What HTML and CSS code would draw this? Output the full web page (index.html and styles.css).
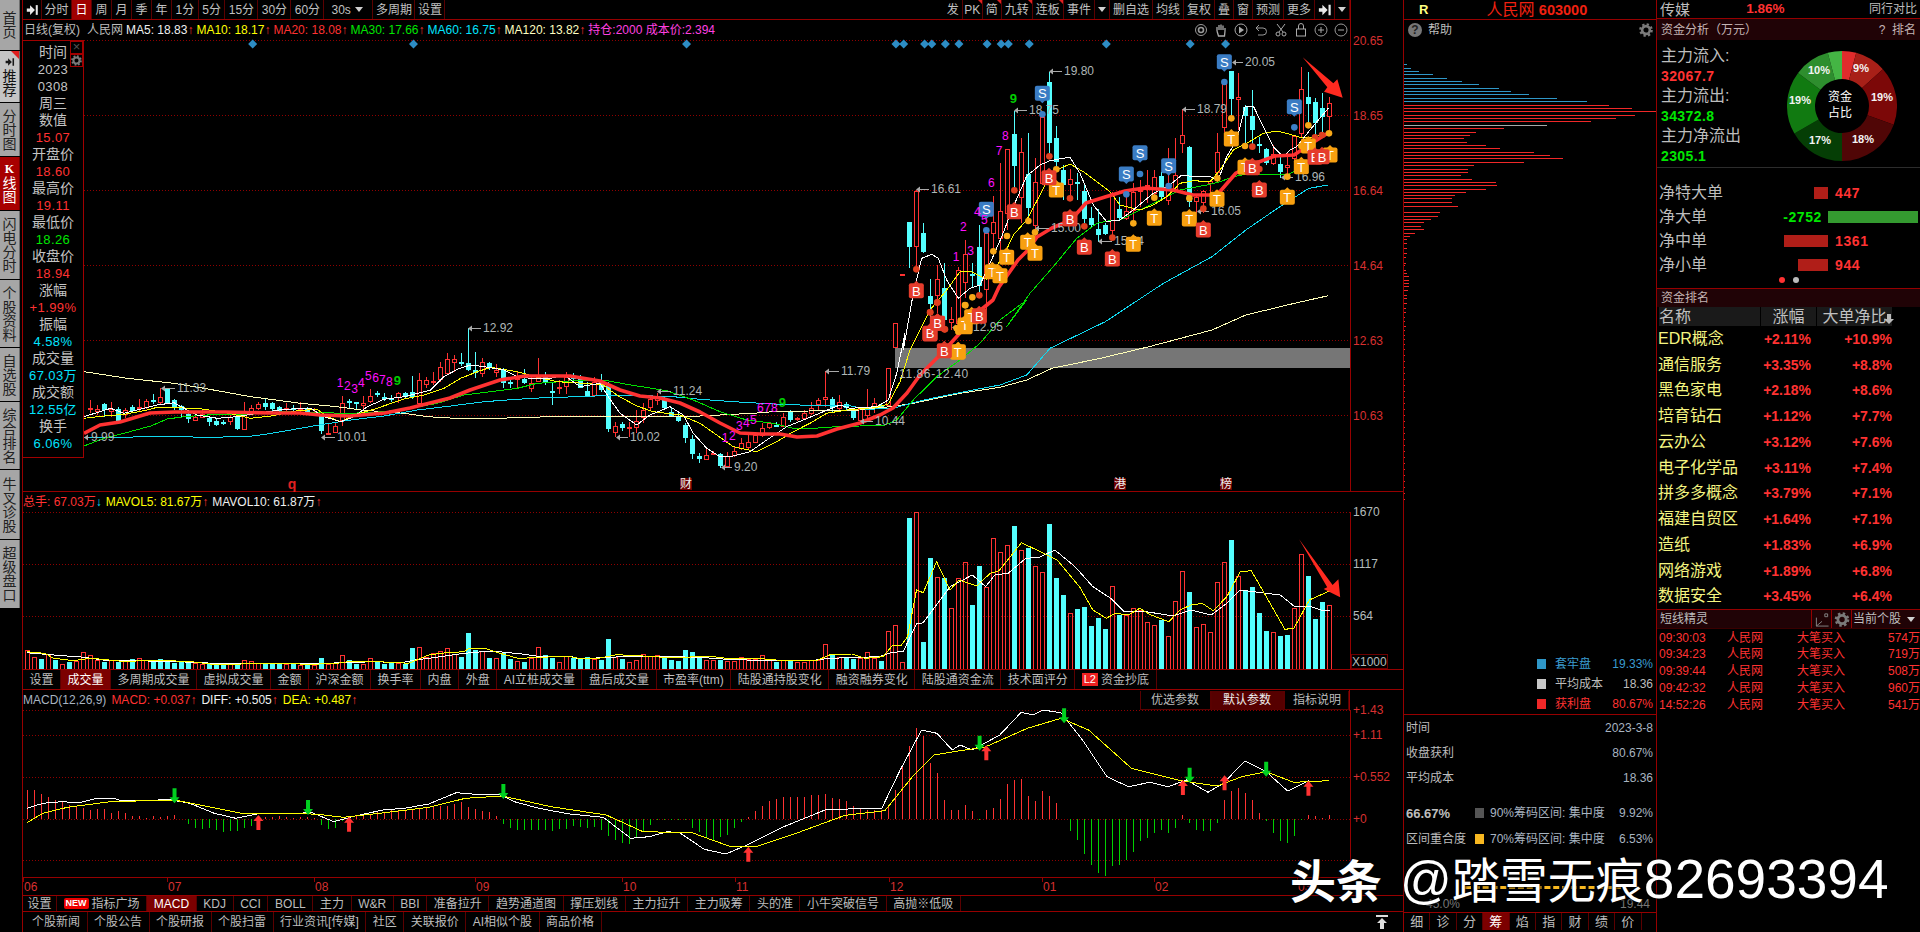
FILE: index.html
```html
<!DOCTYPE html>
<html lang="zh-CN">
<head>
<meta charset="utf-8">
<title>人民网 603000 K线图</title>
<link rel="stylesheet" href="styles.css">
</head>
<body>
<svg class="defs" width="0" height="0"><defs>
<symbol id="gear" viewBox="0 0 16 16"><circle cx="8" cy="8" r="4.4" fill="none" stroke="#7a7a7a" stroke-width="3"/><circle cx="8" cy="8" r="6.5" fill="none" stroke="#7a7a7a" stroke-width="2.6" stroke-dasharray="2.6 2.5"/></symbol>
<symbol id="playend" viewBox="0 0 16 16"><path d="M1 6h4V2l6 6-6 6v-4H1z" fill="#e8e8e8"/><rect x="12" y="2" width="2.5" height="12" fill="#e8e8e8"/></symbol>
</defs></svg>
<div class="app">
  <nav class="side">
    <a class="sbtn h49">首<br>页</a>
    <a class="sbtn h51 lite"><svg class="sico"><use href="#playend"/></svg>推<br>荐</a>
    <a class="sbtn h53">分<br>时<br>图</a>
    <a class="sbtn h53 on"><b class="k">K</b>线<br>图</a>
    <a class="sbtn h68">闪<br>电<br>分<br>时</a>
    <a class="sbtn h67">个<br>股<br>资<br>料</a>
    <a class="sbtn h53">自<br>选<br>股</a>
    <a class="sbtn h67">综<br>合<br>排<br>名</a>
    <a class="sbtn h69">牛<br>叉<br>诊<br>股</a>
    <a class="sbtn h68">超<br>级<br>盘<br>口</a>
  </nav>

  <main class="center">
    <div class="toolbar">
      <div class="tgroup left">
        <a class="tb ico"><svg class="i14"><use href="#playend"/></svg></a>
        <a class="tb w30">分时</a><a class="tb on">日</a><a class="tb">周</a><a class="tb">月</a><a class="tb">季</a><a class="tb">年</a>
        <a class="tb">1分</a><a class="tb">5分</a><a class="tb w33">15分</a><a class="tb w33">30分</a><a class="tb w33">60分</a>
        <a class="tb w49">30s<i class="tri"></i></a><a class="tb w42">多周期</a><a class="tb w30">设置</a>
      </div>
      <div class="tgroup">
        <a class="tb">发</a><a class="tb flag tight">PK</a><a class="tb flag">简</a><a class="tb flag">九转</a><a class="tb flag">连板</a><a class="tb">事件</a><a class="tb w15"><i class="tri"></i></a>
        <a class="tb">删自选</a><a class="tb">均线</a><a class="tb">复权</a><a class="tb">叠</a><a class="tb">窗</a><a class="tb">预测</a><a class="tb">更多</a>
        <a class="tb ico"><svg class="i14"><use href="#playend"/></svg></a><a class="tb w15"><i class="tri"></i></a>
      </div>
    </div>

    <div class="legend">
      <span>日线(复权)</span><span class="ml">人民网</span>
      <span class="cw">MA5: 18.83<b class="up">↑</b></span>
      <span class="cy">MA10: 18.17<b class="up">↑</b></span>
      <span class="cr">MA20: 18.08<b class="up">↑</b></span>
      <span class="cg">MA30: 17.66<b class="up">↑</b></span>
      <span class="cc">MA60: 16.75<b class="up">↑</b></span>
      <span class="cp">MA120: 13.82<b class="up">↑</b></span>
      <span class="cm">持仓:2000 成本价:2.394</span>
      <span class="tools">
        <svg viewBox="0 0 14 14"><circle cx="7" cy="7" r="5.5" fill="none" stroke="#999"/><circle cx="7" cy="7" r="2.5" fill="none" stroke="#999" stroke-width="1.6"/></svg>
        <svg viewBox="0 0 14 14"><path d="M3 8V4M5 7V2M7 7V1.5M9 7V2.5M11 8V5M3 8l1.5 5h6L11 8" fill="none" stroke="#aaa" stroke-width="1.3"/></svg>
        <svg viewBox="0 0 14 14"><circle cx="7" cy="7" r="6" fill="none" stroke="#aaa"/><path d="M5 3.5l5 3.5-5 3.5z" fill="#aaa"/></svg>
        <svg viewBox="0 0 14 14"><path d="M2 5h7a3.5 3.5 0 0 1 0 7H4M2 5l3-3M2 5l3 3" fill="none" stroke="#999"/></svg>
        <svg viewBox="0 0 14 14"><path d="M3 1l6 8M11 1L5 9" stroke="#aaa" fill="none"/><circle cx="4" cy="11" r="2" fill="none" stroke="#aaa"/><circle cx="10" cy="11" r="2" fill="none" stroke="#aaa"/></svg>
        <svg viewBox="0 0 14 14"><rect x="2.5" y="6" width="9" height="7" fill="none" stroke="#aaa"/><path d="M4.5 6V3a2.5 2.5 0 0 1 5 0v3" fill="none" stroke="#aaa"/></svg>
        <svg viewBox="0 0 14 14"><circle cx="7" cy="7" r="6" fill="none" stroke="#999"/><path d="M4 7h6M7 4v6" stroke="#aaa"/></svg>
        <svg viewBox="0 0 14 14"><circle cx="7" cy="7" r="6" fill="none" stroke="#999"/><path d="M4 7h6" stroke="#aaa"/></svg>
      </span>
    </div>

    <section class="kpanel">
      <svg id="kchart" class="plot" width="1380" height="451" viewBox="23 40 1380 451"></svg>
      <aside class="info">
        <i class="ibox x">×</i><i class="ibox g"><svg><use href="#gear"/></svg></i>
        <p>时间</p><p class="n">2023</p><p class="n">0308</p><p>周三</p><p>数值</p>
        <p class="n cr">15.07</p><p>开盘价</p><p class="n cr">18.60</p><p>最高价</p><p class="n cr">19.11</p>
        <p>最低价</p><p class="n cg">18.26</p><p>收盘价</p><p class="n cr">18.94</p><p>涨幅</p>
        <p class="n cr">+1.99%</p><p>振幅</p><p class="n cc">4.58%</p><p>成交量</p><p class="n cc">67.03万</p>
        <p>成交额</p><p class="n cc">12.55亿</p><p>换手</p><p class="n cc">6.06%</p>
      </aside>
    </section>

    <section class="volpanel">
      <div class="sublegend">
        <span class="cr">总手: 67.03万<b class="cc">↓</b></span>
        <span class="cy">MAVOL5: 81.67万<b class="up">↑</b></span>
        <span class="cw">MAVOL10: 61.87万<b class="up">↑</b></span>
      </div>
      <svg id="vchart" class="plot" width="1380" height="158" viewBox="23 512 1380 158"></svg>
    </section>

    <div class="tabs r20">
      <a>设置</a><a class="on">成交量</a><a>多周期成交量</a><a>虚拟成交量</a><a>金额</a><a>沪深金额</a><a>换手率</a><a>内盘</a><a>外盘</a><a>AI立桩成交量</a><a>盘后成交量</a><a>市盈率(ttm)</a><a>陆股通持股变化</a><a>融资融券变化</a><a>陆股通资金流</a><a>技术面评分</a><a><em class="l2">L2</em>资金抄底</a>
    </div>

    <section class="macd">
      <div class="sublegend between">
        <div class="row">
          <span class="cgray">MACD(12,26,9)</span>
          <span class="cr">MACD: +0.037<b class="up">↑</b></span>
          <span class="cw">DIFF: +0.505<b class="up">↑</b></span>
          <span class="cy">DEA: +0.487<b class="up">↑</b></span>
        </div>
        <div class="params"><a>优选参数</a><a class="on">默认参数</a><a>指标说明</a></div>
      </div>
      <svg id="mchart" class="plot" width="1380" height="185" viewBox="23 710 1380 185"></svg>
    </section>

    <div class="tabs r17">
      <a>设置</a><a><em class="new">NEW</em>指标广场</a><a class="on">MACD</a><a>KDJ</a><a>CCI</a><a>BOLL</a><a>主力</a><a>W&amp;R</a><a>BBI</a><a>准备拉升</a><a>趋势通道图</a><a>撑压划线</a><a>主力拉升</a><a>主力吸筹</a><a>头的准</a><a>小牛突破信号</a><a>高抛※低吸</a>
    </div>
    <div class="tabs r20 wide">
      <a>个股新闻</a><a>个股公告</a><a>个股研报</a><a>个股扫雷</a><a>行业资讯[传媒]</a><a>社区</a><a>关联报价</a><a>AI相似个股</a><a>商品价格</a>
      <svg class="totop" viewBox="0 0 14 14"><rect x="1" y="0" width="12" height="2" fill="#ddd"/><path d="M7 3l5 5H9v6H5V8H2z" fill="#ddd"/></svg>
    </div>
  </main>

  <section class="chip">
    <header class="chiptop"><b class="r">R</b><span class="stock">人民网 <b>603000</b></span></header>
    <div class="help"><i class="q">?</i><span>帮助</span><svg class="gear16"><use href="#gear"/></svg></div>
    <svg id="cchart" width="252" height="614" viewBox="1404 41 252 614"></svg>
    <div class="lg"><i class="sq s-b"></i><span class="cblue">套牢盘</span><em class="cblue">19.33%</em></div>
    <div class="lg"><i class="sq s-g"></i><span>平均成本</span><em>18.36</em></div>
    <div class="lg"><i class="sq s-r"></i><span class="cr">获利盘</span><em class="cr">80.67%</em></div>
    <div class="stats">
      <div class="st"><span>时间</span><em>2023-3-8</em></div>
      <div class="st"><span>收盘获利</span><em>80.67%</em></div>
      <div class="st"><span>平均成本</span><em>18.36</em></div>
      <div class="st2 first"><b>66.67%</b><i class="sq2 s-d"></i><span>90%筹码区间: 集中度</span><em>9.92%</em></div>
      <div class="st2"><b class="thin">区间重合度</b><i class="sq2 s-y"></i><span>70%筹码区间: 集中度</span><em>6.53%</em></div>
    </div>
    <div class="range"><div class="dash"></div><div class="rlabels"><span>45.0%</span><span>19.44</span></div></div>
    <div class="chiptabs"><a>细</a><a>诊</a><a>分</a><a class="on">筹</a><a>焰</a><a>指</a><a>财</a><a>绩</a><a>价</a></div>
  </section>

  <aside class="right">
    <div class="rtop"><span class="big">传媒</span><b class="pct">1.86%</b><span>同行对比</span></div>
    <div class="rhead"><span>资金分析（万元）</span><span>?&nbsp;&nbsp;排名</span></div>
    <div class="fund">
      <div class="fund-l">
        <p>主力流入:</p><p class="v cr">32067.7</p>
        <p>主力流出:</p><p class="v cg">34372.8</p>
        <p>主力净流出</p><p class="v cg">2305.1</p>
      </div>
      <svg id="donut" width="110" height="110" viewBox="-55 -55 110 110"></svg>
    </div>
    <div id="flows" class="flows"></div>
    <div class="dots"><i class="d1"></i><i class="d2"></i></div>
    <div class="rhead slim"><span>资金排名</span></div>
    <div class="rankh"><span class="l">名称</span><span>涨幅</span><span>大单净比<svg class="down" viewBox="0 0 10 10"><path d="M3 0h4v5h3L5 10 0 5h3z" fill="#bbb"/></svg></span></div>
    <div id="rank"></div>
    <div class="shead"><span class="t">短线精灵</span><span class="sb"><svg viewBox="0 0 16 16"><path d="M2 6V15H15M2 15l6-5M11 2h3v3h-3z" fill="none" stroke="#888"/></svg></span><span class="sb"><svg><use href="#gear"/></svg></span><span class="cur">当前个股<i class="tri"></i></span></div>
    <div id="short"></div>
  </aside>

  <div class="watermark"><b>头条</b><span class="at">@</span>踏雪无痕<span>82693394</span></div>
</div>
<script src="chart.js"></script>
</body>
</html>
```

FILE: styles.css
```css
* { box-sizing: border-box; }
html, body { margin: 0; height: 932px; background: #000; overflow: hidden; }
body { font: 12px/1 "Liberation Sans", "Noto Sans CJK SC", sans-serif; color: #bdbdbd; }
p { margin: 0; }
a { display: block; }
i, em { font-style: normal; }
.defs { position: absolute; }

.app { position: relative; display: grid; grid-template-columns: 22px 1381px 253px 264px; height: 932px; }

/* colours */
.cr { color: #ff3232; } .cg { color: #00e600; } .cc { color: #00e4ff; } .cy { color: #ffff00; }
.cw { color: #f0f0f0; } .cp { color: #ffffc0; } .cm { color: #ff40e0; } .cgray { color: #a8b4c0; }
.cblue { color: #3a9bd0; }
b.up { color: #ff3232; font-weight: normal; }
b { font-weight: normal; }

/* sidebar */
.side { display: flex; flex-direction: column; gap: 1px; width: 20px; }
.sbtn { display: flex; flex-direction: column; justify-content: center; align-items: center; background: #a6a6a6; border-right: 1px solid #6e6e6e; color: #222; font-size: 14px; line-height: 14px; text-align: center; }
.sbtn.lite { position: relative; background: #c4c4c4; color: #111; }
.sbtn.lite::after { content: ""; position: absolute; top: 0; right: 0; border: 4px solid transparent; border-top-color: #e02020; border-right-color: #e02020; }
.sbtn.on { background: #a80000; color: #fff; border-right-color: #700000; }
.sbtn .k { font: bold 12px/13px "Liberation Serif", serif; }
.sico { width: 10px; height: 10px; margin-bottom: 2px; filter: invert(1); }
.h49 { height: 50px; } .h51 { height: 51px; } .h53 { height: 53px; }
.h67 { height: 67px; } .h68 { height: 68px; } .h69 { height: 69px; }

/* center */
.center { display: flex; flex-direction: column; border-left: 1px solid #960000; min-width: 0; }
.toolbar { display: flex; justify-content: space-between; width: 1328px; height: 20px; border-bottom: 1px solid #960000; border-right: 1px solid #960000; }
.tgroup { display: flex; }
.tb { position: relative; display: flex; align-items: center; justify-content: center; height: 19px; padding: 0 3px; border-right: 1px solid #5a0000; color: #c0c0c0; white-space: nowrap; }
.left .tb { padding: 0 3.5px; }
.tb.on { background: #a00000; color: #fff; }
.left .tb.w30 { width: 30px; padding: 0; } .left .tb.w42 { width: 42px; padding: 0; }
.left .tb.w33 { width: 33px; padding: 0; }
.left .tb.w49 { width: 49px; justify-content: flex-start; gap: 4px; padding: 0 0 0 7px; }
.tb.w15 { width: 15px; padding: 0; }
.tb.tight { padding: 0 1.5px; }
.tb.ico { padding: 0 2.5px; }
.left .tb.ico { padding: 0 2.5px; width: 19px; }
.tb.flag::after { content: ""; position: absolute; top: 0; right: 0; border: 2.5px solid transparent; border-top-color: #e02020; border-right-color: #e02020; }
.i14 { width: 14px; height: 14px; }
.tri { display: inline-block; border: 4px solid transparent; border-top: 5px solid #d0d0d0; border-bottom: 0; }

.legend { display: flex; align-items: center; gap: 3px; width: 1328px; height: 20px; padding-left: 1px; border-right: 1px solid #960000; white-space: nowrap; }
.legend .ml { margin-left: 4px; }
.tools { display: flex; gap: 6px; margin-left: auto; padding-right: 2px; }
.tools svg { width: 14px; height: 14px; }

.kpanel { position: relative; height: 451px; }
.plot { display: block; overflow: visible; }
.info { position: absolute; left: -1px; top: 0; width: 62px; height: 418px; padding-top: 3px; background: #000; border: 1px solid #a00000; text-align: center; font-size: 14px; line-height: 17px; color: #c4c4c4; }
.info p.n { font-size: 13px; letter-spacing: .4px; }
.ibox { position: absolute; right: 0; width: 13px; height: 13px; border: 1px solid #a00000; color: #555; font-size: 13px; line-height: 10px; }
.ibox.x { top: 0; }
.ibox.g { top: 13px; }
.ibox svg { width: 11px; height: 11px; display: block; }

.volpanel { height: 179px; border-top: 1px solid #960000; }
.sublegend { display: flex; align-items: center; gap: 4px; height: 20px; white-space: nowrap; }
.sublegend .row { display: flex; gap: 5px; align-items: center; }
.sublegend.between { justify-content: space-between; width: 1327px; border-right: 1px solid #960000; }
.volpanel .sublegend { height: 20px; }

.tabs { display: flex; border-bottom: 1px solid #960000; white-space: nowrap; }
.tabs a { display: flex; align-items: center; height: 100%; padding: 0 6.5px; border-right: 1px solid #5a0000; color: #bdbdbd; }
.tabs a.on { background: #7c0000; color: #fff; }
.r20 { height: 20px; } .r17 { height: 17px; }
.r17 { border-top: 1px solid #960000; }
.r17 a { padding: 0 6.6px; }
.r17 a:first-child { padding: 0 4.5px; }
.wide { border-bottom: 0; position: relative; }
.wide a { padding: 0 6.5px; }
.wide a:first-child { padding: 0 6.5px 0 9px; }
.totop { width: 14px; height: 14px; margin: 3px 14px 0 auto; }
.l2 { background: #ee2020; color: #fff; padding: 1px 2px; margin-right: 3px; font-size: 11px; }
.new { background: #ee0000; color: #fff; font-size: 9px; font-weight: bold; padding: 1px 2px; margin-right: 3px; border-radius: 2px; }

.macd { height: 205px; }
.params { display: flex; height: 19px; }
.params a { display: flex; align-items: center; padding: 0 10px; border: 1px solid #5a0000; border-top: 0; color: #bdbdbd; width: 71px; white-space: nowrap; }
.params a.on { background: #560000; color: #eee; width: 73px; padding: 0 11px; }
.params a:last-child { width: 65px; padding: 0 8px; }

/* chip */
.chip { display: flex; flex-direction: column; border-left: 1px solid #960000; }
.chiptop { display: flex; align-items: center; height: 20px; padding-left: 15px; border-bottom: 1px solid #960000; }
.chiptop .r { color: #ffff80; font: bold 13px "Liberation Sans", sans-serif; }
.stock { margin-left: 58px; color: #f02010; font-size: 16px; }
.stock b { font-weight: bold; font-size: 14.5px; }
.help { display: flex; align-items: center; height: 20px; padding: 0 3px 0 4px; gap: 6px; }
.q { width: 14px; height: 14px; border-radius: 50%; background: #777; color: #222; font-weight: bold; text-align: center; line-height: 14px; }
.gear16 { width: 14px; height: 14px; margin-left: auto; }
#cchart { display: block; }
.lg { display: flex; align-items: center; height: 20px; padding: 0 3px 0 133px; color: #bdbdbd; }
.lg em { margin-left: auto; }
.sq { width: 9px; height: 10px; margin-right: 9px; }
.s-b { background: #2f97c8; } .s-g { background: #c8c8c8; } .s-r { background: #f02828; }
.stats { border-top: 1px solid #960000; }
.st { display: flex; justify-content: space-between; align-items: center; height: 25px; padding: 0 3px 0 2px; }
.st em { color: #a8b4c0; }
.st2 { display: flex; align-items: center; height: 26px; padding: 0 3px 0 2px; white-space: nowrap; }
.st2.first { margin-top: 10px; }
.st2 > b { width: 69px; font-size: 13px; font-weight: bold; }
.st2 > b.thin { font-size: 12px; font-weight: normal; }
.st2 em { margin-left: auto; color: #a8b4c0; }
.st2 span { color: #a8b4c0; }
.sq2 { width: 9px; height: 10px; margin: 0 6px 0 0; }
.s-d { background: #555; } .s-y { background: #f8b820; }
.range { height: 60px; padding-top: 34px; }
.dash { width: 156px; margin-left: 61px; border-top: 3px dashed #f8b820; }
.rlabels { display: flex; justify-content: space-between; padding: 9px 6px 0 22px; color: #777; }
.chiptabs { display: flex; height: 18px; border-top: 1px solid #960000; }
.chiptabs a { width: 26.4px; text-align: center; line-height: 17px; font-size: 13px; color: #bdbdbd; border-right: 1px solid #5a0000; }
.chiptabs a.on { background: #7c0000; color: #fff; }

/* right */
.right { display: flex; flex-direction: column; border-left: 1px solid #960000; }
.rtop { display: flex; justify-content: space-between; align-items: center; height: 19px; padding: 0 3px 0 3px; border-bottom: 1px solid #960000; }
.rtop .big { font-size: 15px; width: 60px; }
.pct { color: #ff3232; font-size: 13.5px; font-weight: bold; margin-right: 58px; }
.rhead { display: flex; justify-content: space-between; align-items: center; height: 21px; padding: 0 4px 0 4px; background: #200306; color: #c4b4b4; }
.rhead.slim { height: 19px; border-top: 1px solid #960000; }
.fund { display: flex; justify-content: space-between; height: 128px; padding: 6px 23px 0 4px; border-bottom: 1px solid #2c2c2c; }
.fund-l { font-size: 16px; line-height: 20px; color: #bdbdbd; }
.fund-l .v { font: bold 14px/20px "Liberation Sans", sans-serif; letter-spacing: .4px; }
#donut { margin-top: 5px; }
.flows { padding-top: 13px; }
.frow { display: grid; grid-template-columns: 101px 68px 90px; align-items: center; height: 24px; padding-left: 2px; font-size: 16px; }
.fcell { display: flex; align-items: center; height: 12px; }
.fcell.l { justify-content: flex-end; }
.fbar { height: 12px; }
.fnum { font: bold 14px "Liberation Sans", sans-serif; letter-spacing: .6px; }
.fcell.r .fnum { margin-left: 7px; }
.fcell.l .fnum { margin-right: 6px; }
.dots { display: flex; gap: 8px; height: 11px; padding: 0 0 0 122px; }
.dots i { width: 6px; height: 6px; border-radius: 50%; }
.d1 { background: #ff3232; } .d2 { background: #bbb; }
.rankh { display: grid; grid-template-columns: 101px 55px 75px; gap: 1px; height: 19px; padding-left: 2px; font-size: 16px; line-height: 19px; text-align: center; }
.rankh span { background: #1a1a1a; color: #c0c0c0; position: relative; white-space: nowrap; }
.rankh .l { text-align: left; }
.down { position: absolute; right: -2px; top: 7px; width: 10px; height: 10px; }
.rrow { display: grid; grid-template-columns: 103px 50px 81px; align-items: center; height: 25.75px; padding-left: 1px; }
.rrow .n { color: #f4f480; font-size: 16px; white-space: nowrap; }
.rrow b { color: #ff3232; font: bold 14px "Liberation Sans", sans-serif; text-align: right; }
.shead { display: flex; align-items: stretch; height: 20px; background: #200306; border-top: 1px solid #960000; border-bottom: 1px solid #3a0000; }
.shead .t { flex: 1; padding-left: 3px; line-height: 19px; }
.sb { width: 20px; border-left: 1px solid #960000; padding: 2px; }
.sb svg { width: 16px; height: 15px; display: block; }
.cur { display: flex; align-items: center; gap: 6px; width: 69px; padding-left: 1px; border-left: 1px solid #960000; }
.srow { display: grid; grid-template-columns: 68px 70px 1fr auto; align-items: center; height: 16.8px; padding-left: 2px; color: #ff3232; white-space: nowrap; }

.watermark { position: absolute; left: 1290px; top: 847px; color: #fff; font: 48px/60px "Noto Sans CJK SC", sans-serif; white-space: nowrap; text-shadow: 0 0 3px #000, 0 0 3px #000; }
.watermark b { font-weight: bold; font-size: 46px; }
.watermark span { font: 55px/60px "Liberation Sans", sans-serif; }
.watermark .at { margin-left: 18px; font-size: 51px; }
```

FILE: chart.js
```js
// Scale helpers: chart coordinates were read from crops of the reference.
const T = {
  z1: (x, y) => [x / 2.45, y / 3],
  z2: (x, y) => [640 + x / 2.063, y / 3],
  z5: (x, y) => [x / 2.24, 480 + y / 3],
  z6: (x, y) => [700 + x / 2.24, 480 + y / 3],
  z7: (x, y) => [x / 1.633, 700 + y / 3],
  z8: (x, y) => [960 + x / 1.633, 660 + y / 3],
  z9: (x, y) => [84 + x / 3, 320 + y / 3],
  z10: (x, y) => [560 + x / 3, 300 + y / 3],
  z11: (x, y) => [880 + x / 3, 50 + y / 3],
  z12: (x, y) => [1120 + x / 3, 50 + y / 3],
};
const R = '#ff3232', C = '#54ffff', W = '#ffffff', Y = '#ffff00', G = '#00e000', CY = '#10d8f0', PY = '#ffffb8';
const pts = (k, s) => s.trim().split(/\s+/).map(p => { const [x, y] = p.split(',').map(Number); return T[k](x, y); });
const line = (p, c, w) => `<polyline fill="none" stroke="${c}" stroke-width="${w}" stroke-linejoin="round"${w < 2 ? ' shape-rendering="crispEdges"' : ''} points="${p.map(a => a[0].toFixed(1) + ',' + a[1].toFixed(1)).join(' ')}"/>`;
const text = (x, y, s, c, fs, extra) => `<text x="${x}" y="${y}" fill="${c}" font-size="${fs}" dominant-baseline="central" ${extra || ''}>${s}</text>`;
const cx = i => 27 + 7 * i;
const grid = (ys, x0, x1) => ys.map(y => `<line x1="${x0}" x2="${x1}" y1="${y + .5}" y2="${y + .5}" stroke="#900000" stroke-dasharray="1 2"/>`).join('');

/* ---------- candles: i h t b l per row ---------- */
const seg = [
  ['z9', 8, `r 255 270 295 300,r 240 265 268 280,r 255 266 272 285,c 250 252 270 290,r 245 268 272 290,c 262 268 303 305,r 265 270 283 295,c 255 260 272 280,r 238 262 265 272,r 238 242 262 268,c 222 240 243 252,r 205 232 246 255,c 205 207 248 250,c 238 240 262 270,c 255 257 270 293,c 270 283 298 308,r 280 290 300 302,r 270 283 290 293,c 290 295 305 318,c 298 302 315 318,c 300 307 310 316,r 280 290 303 315,c 285 292 327 329,r 247 285 327 327,r 255 265 278 283,r 245 253 263 270,c 238 248 262 270,c 245 250 268 275,c 258 262 272 278,r 250 263 268 275,c 255 265 268 275,r 247 265 267 278,c 262 265 280 282,r 265 275 278 285,c 283 287 332 342,r 308 340 342 342,r 308 318 335 340,r 228 248 300 318,c 238 242 248 265,c 245 247 249 267,r 228 250 254 268,r 208 228 242 250,c 213 220 223 232,c 220 230 232 242,c 225 235 238 245,r 215 220 232 248,c 215 220 230 235,c 168 216 232 238,r 160 180 248 250,r 172 180 192 205,r 155 183 187 195,r 125 142 178 185,r 100 118 158 158,r 105 118 127 155,c 100 127 130 137,c 25 130 150 152,c 97 150 160 175,r 115 125 158 172,c 125 128 142 150,r 132 150 155 170,c 145 148 190 205,c 172 186 190 205,r 155 175 178 205,c 148 178 188 192,r 172 190 205 215,r 115 172 182 185,c 155 172 190 195,c 190 212 215 255,r 180 200 205 222,r 155 170 198 222,c 158 172 178 190,c 165 175 205 205`],
  ['z10', 80, `c 245 272 288 290,r 230 245 285 285,c 222 245 270 275,c 245 255 388 395,r 365 378 395 410,c 365 372 385 392,r 365 380 384 410,r 330 362 380 400,r 310 330 352 370,r 288 298 320 330,r 280 295 300 315,c 290 300 325 328,c 320 335 348 352,c 335 347 362 365,c 368 375 415 428,c 405 417 462 478,c 460 467 478 488,r 448 466 476 478,r 452 458 460 466,c 460 463 497 505,r 455 467 497 505,r 440 452 466 470,r 415 428 445 450,r 405 425 441 448,r 395 405 425 430,r 368 383 405 412,r 365 370 382 388,c 365 375 378 382,r 340 352 378 382,c 330 337 360 365,r 350 354 358 362,r 330 340 353 355,r 305 323 338 345,r 295 301 312 330,r 212 292 296 320,c 292 298 325 335,r 285 305 325 330,c 305 313 325 330,c 325 330 355 360,r 320 328 360 365,r 268 325 345 360,r 295 308 325 340,c 310 315 322 325,r 205 205 315 318,r 68 70 140 140`],
  ['z11', 125, `r 672 672 675 675,c 515 515 590 655,r 420 422 587 650,c 520 550 605 610,c 688 738 762 810,r 645 688 735 790,c 640 715 810 830,r 770 808 815 840,r 650 660 820 830,r 570 613 695 745,c 640 672 676 715,c 525 592 708 740,r 535 548 718 780,r 438 515 548 600,r 340 482 565 605,r 298 298 490 540,c 182 252 347 420,r 265 305 440 520,c 250 372 475 520,r 325 395 525 560,r 195 200 400 405,c 65 97 278 310,c 228 265 335 350,c 345 360 405 450,r 358 388 403 440,c 370 395 403 450,c 400 423 507 520,c 470 505 525 530,c 478 538 555 575,c 520 525 552 555,r 425 430 540 560,c 440 477 505 510,r 440 483 503 510,r 400 425 480 510`],
  ['z12', 159, `r 390 420 422 470,r 360 405 408 460,r 360 380 430 440,c 365 378 440 450,r 295 410 450 465,r 265 375 420 430,r 178 256 278 310,c 288 290 455 470,r 435 440 452 490,r 420 422 455 490,r 390 393 398 430,r 248 305 365 395,r 88 100 230 245,c 62 62 148 205,r 70 140 146 240,c 165 170 197 280,c 120 198 240 290,c 260 283 287 310,c 295 297 340 345,r 285 312 340 345,c 320 342 365 385,r 310 345 350 385,r 255 258 325 345,r 52 118 248 265,c 65 142 162 230,c 145 155 220 260,c 130 173 202 245,r 142 160 197 250`],
];
function candles() {
  let o = '';
  seg.forEach(([k, i0, s]) => s.split(',').forEach((row, n) => {
    const p = row.trim().split(' '), c = p[0] === 'r' ? R : C;
    const [h, t, b, l] = p.slice(1).map(v => Math.round(T[k](0, +v)[1]));
    const x = cx(i0 + n);
    if (x < 85) return;
    o += `<line x1="${x + .5}" x2="${x + .5}" y1="${h}" y2="${l}" stroke="${c}"/>`;
    o += p[0] === 'r'
      ? `<rect x="${x - 2 + .5}" y="${t + .5}" width="4" height="${Math.max(1, b - t)}" fill="#000" stroke="${c}"/>`
      : `<rect x="${x - 2}" y="${t}" width="5" height="${Math.max(2, b - t)}" fill="${c}"/>`;
  }));
  return `<g shape-rendering="crispEdges">${o}</g>`;
}

/* ---------- moving averages ---------- */
const ma = {
  red: [...pts('z9', '0,340'), [100, 425], [120, 422], [150, 413], [175, 412], [225, 412], [270, 413], [300, 413], [320, 415], [350, 416], [385, 413], [410, 408], [450, 398], [470, 390], [500, 380], [525, 376], [570, 376], [600, 381], [620, 390], [640, 396], [660, 398], [680, 403], [700, 412], [720, 423], [740, 433], [760, 434], [780, 434], [797, 437], [817, 436], [837, 429], [860, 423], [880, 415], [893, 408], [907, 393], [920, 375], [940, 355], [960, 333], [977, 313], [993, 300], [999, 287], [1018, 260], [1028, 250], [1037, 237], [1052, 228], [1071, 220], [1086, 203], [1105, 197], [1125, 191], [1144, 188], [1173, 190], [1193, 195], [1217, 195], [1236, 173], [1256, 163], [1275, 156], [1294, 155], [1309, 145], [1328, 133]],
  yellow: [...pts('z9', '0,295 60,288 120,283 180,272 220,262 340,265 420,277 500,295 560,288 640,272 700,268 730,290 770,305 810,285 870,268 960,237 1020,225 1080,205 1130,175 1180,155 1220,142 1300,155 1360,172 1420,185 1500,190'),
    ...pts('z10', '130,255 170,285 230,318 280,335 360,345 420,370 470,405 520,440 590,455 650,425 700,395 750,370 800,340 860,330 950,322 985,312 1020,245 1050,150 1090,70'),
    ...pts('z11', '150,780 200,720 240,665 275,665 320,688 370,620 400,555 440,510 480,435 500,395 530,360 570,342 610,365 650,395 690,425 720,465'),
    ...pts('z12', '60,480 100,465 140,440 180,400 220,392 270,395 300,360 340,300 380,280 430,250 470,243 500,250 540,262 580,262 625,250')],
  white: [...pts('z9', '0,290 80,265 120,280 180,265 220,255 270,248 300,265 340,285 400,295 460,290 520,280 600,268 680,265 720,290 770,305 810,290 850,260 900,238 960,230 1040,210 1080,170 1120,148 1160,135 1200,140 1260,150 1300,170 1340,175 1400,175 1440,165'),
    ...pts('z10', '60,260 120,250 145,290 180,340 230,375 270,345 330,320 370,345 400,400 440,445 480,470 520,468 570,455 620,420 680,380 730,360 790,335 840,315 870,325 950,320 985,300 1010,220 1035,100'),
    ...pts('z11', '70,900 100,730 125,625 155,613 175,625 200,690 235,745 270,715 300,705 330,640 365,560 400,470 440,378 480,345 510,332 550,325 570,322 600,370 640,465 680,515 700,512'),
    ...pts('z12', '0,510 40,480 100,430 120,420 150,405 185,375 220,380 270,380 295,390 320,320 350,270 375,170 400,168 430,230 460,290 490,320 510,300 530,290 570,240 625,175')],
  green: [...pts('z9', '0,378 60,355 120,340 200,318 250,297 300,290 400,283 500,283 600,275 700,278 800,280 900,275 980,265 1060,250 1140,225 1220,215 1300,205 1360,190 1430,185'),
    ...pts('z10', '60,240 130,240 200,253 320,272 400,300 480,335 560,360 640,370 700,385 760,385 830,380 900,378 970,377 1010,360 1060,300 1130,230 1200,180 1260,130 1320,60 1400,0'),
    ...pts('z11', '380,830 450,730 520,650 590,565 650,520 700,510'),
    ...pts('z12', '0,510 100,460 180,420 260,405 300,395 340,380 380,372 500,375 530,360 560,340 625,305')],
  cyan: [...pts('z9', '0,352 300,350 350,352 490,350 550,342 620,330 700,316 800,300 900,288 1000,270 1100,258 1200,245 1300,238 1400,232'),
    ...pts('z10', '0,292 130,287 250,287 340,290 420,298 520,305 640,312 720,315 860,315 920,328 1000,325 1070,305 1130,292 1250,268 1320,255 1400,225 1470,145'),
    ...pts('z2', '960,965 1080,850 1180,770 1250,690 1320,620 1380,565 1420,555')],
  pale: [...pts('z9', '0,155 130,175 270,190 360,205 500,230 650,250 760,260 830,270 960,280 1030,290 1150,297 1250,295 1310,292 1430,290'),
    ...pts('z10', '0,350 420,348 580,340 640,335 900,330 990,320 1060,310 1200,280 1320,262 1400,240'),
    ...pts('z2', '850,1105 950,1075 1050,1040 1180,990 1250,945 1350,910 1420,887')],
};

/* ---------- markers ---------- */
const DOT = { r: '#e04020', o: '#f8a818', b: '#3c80c8' };
const dots = [
  ...['109,658', '172,757', '150,787', '193,838', '298,736', '403,421', '508,319', '570,445', '613,529', '697,563'].map(p => ['z11', p, 'r']),
  ...['256,766', '277,742', '235,845', '340,604', '381,558', '445,513', '465,547', '529,358', '760,520'].map(p => ['z11', p, 'o']),
  ...['319,541', '487,193', '739,433', '780,372'].map(p => ['z11', p, 'b']),
  ...['1111,37', '1132,8', '1155,88'].map(p => ['z10', p, 'r']), ['z10', '1215,15', 'o'], ['z10', '1190,85', 'o'],
  ...['146,408', '313,96', '523,232'].map(p => ['z12', p, 'b']),
  ...['103,443', '208,445', '292,385', '334,205', '375,288', '502,380', '544,288', '565,226', '627,250'].map(p => ['z12', p, 'o']),
  ...['250,476', '397,290', '418,357', '585,262', '606,255'].map(p => ['z12', p, 'r']),
];
const badges = [
  ...['235,905', '255,830', '337,665', '360,677', '380,622', '443,577', '465,610', '529,420', '760,583'].map(p => ['z11', p, 'T']),
  ...['319,478', '487,130', '739,372', '780,308'].map(p => ['z11', p, 'S']),
  ...['109,722', '172,820', '150,852', '297,798', '403,485', '507,383', '570,507', '613,592', '697,627'].map(p => ['z11', p, 'B']),
  ...['1193,157', '1215,75', '1235,50'].map(p => ['z10', p, 'T']),
  ...['1110,100', '1133,70', '1153,152', '1258,48'].map(p => ['z10', p, 'B']),
  ...['103,505', '208,507', '291,448', '334,267', '375,352', '502,442', '544,350', '565,288', '630,315'].map(p => ['z12', p, 'T']),
  ...['146,347', '313,35', '523,170'].map(p => ['z12', p, 'S']),
  ...['250,540', '397,353', '418,420', '585,322', '606,320'].map(p => ['z12', p, 'B']),
];
const BC = { B: '#e53c2c', T: '#f8a010', S: '#3a7cc4' };
function markers() {
  let o = '';
  dots.forEach(([k, p, c]) => { const [x, y] = T[k](...p.split(',').map(Number)); o += `<circle cx="${x}" cy="${y}" r="3.3" fill="${DOT[c]}"/>`; });
  badges.forEach(([k, p, l]) => {
    const [x, y] = T[k](...p.split(',').map(Number)), c = BC[l];
    const tip = l === 'S' ? `${x - 3},${y + 7} ${x + 3},${y + 7} ${x},${y + 10}` : `${x - 3},${y - 7} ${x + 3},${y - 7} ${x},${y - 10}`;
    o += `<polygon points="${tip}" fill="${c}"/><rect x="${x - 7.5}" y="${y - 7.5}" width="15" height="15" rx="2" fill="${c}"/>`;
    o += text(x, y + .5, l, '#fff', 13, 'text-anchor="middle"');
  });
  return o;
}

const labels = [[468, 328, 483, '12.92'], [161, 388, 177, '11.33'], [84, 437, 91, '9.99'], [321, 437, 337, '10.01'], [616, 437, 630, '10.02'], [657, 391, 673, '11.24'], [721, 467, 734, '9.20'], [825, 371, 841, '11.79'], [860, 421, 875, '10.44'], [952, 327, 973, '12.95'], [916, 189, 931, '16.61'], [1014, 110, 1029, '18.75'], [1049, 71, 1064, '19.80'], [1035, 228, 1051, '15.00'], [1098, 241, 1114, '15.44'], [1232, 62, 1245, '20.05'], [1182, 109, 1197, '18.79'], [1197, 211, 1211, '16.05'], [1281, 177, 1295, '16.96']];
const tdSeq = [
  ['z9', '768,190 790,198 812,207 832,190 853,168 875,173 895,180 916,187 940,182'],
  ['z10', '495,413 517,407 538,378 559,368 580,360 601,323 622,323 643,323 667,308'],
  ['z11', '228,622 250,532 272,603 292,487 313,511 334,400 357,304 376,258 400,146'],
];
const diamonds = [...[619, 1013].map(x => x / 2.45), ...[96, 528, 544, 587, 602, 630, 658, 716, 745, 760, 803, 962, 1135, 1208].map(x => 640 + x / 2.063)];

function kchart() {
  const ys = [40, 115, 190, 265, 340, 415];
  const prices = ['20.65', '18.65', '16.64', '14.64', '12.63', '10.63'];
  let o = grid(ys, 84, 1350);
  o += `<rect x="895" y="348" width="455" height="20" fill="#767676"/>`;
  o += candles();
  o += line(ma.pale, PY, 1) + line(ma.cyan, CY, 1) + line(ma.green, G, 1) + line(ma.yellow, Y, 1) + line(ma.white, W, 1) + line(ma.red, R, 3.6);
  labels.forEach(([x0, y, tx, s]) => {
    o += `<path d="M${x0} ${y + .5}L${x0 + 4} ${y - 2.5}V${y + 3.5}z" fill="#aaa"/><line x1="${x0 + 3}" x2="${tx - 2}" y1="${y + .5}" y2="${y + .5}" stroke="#aaa"/>`;
    o += text(tx, y, s, '#aeb6b6', 12);
  });
  o += text(899, 374, '11.86-12.40', '#aeb6b6', 12, 'letter-spacing=".6"');
  o += markers();
  tdSeq.forEach(([k, s]) => pts(k, s).forEach((p, n) => {
    o += text(p[0], p[1], n + 1, n === 8 ? '#00d000' : '#ff10ff', n === 8 ? 13 : 12, `text-anchor="middle"${n === 8 ? ' font-weight="bold"' : ''}`);
  }));
  diamonds.forEach(x => { o += `<path d="M${x} 39.5l4.5 4.5-4.5 4.5-4.5-4.5z" fill="#2d8cc4"/>`; });
  o += `<line x1="1350.5" x2="1350.5" y1="40" y2="491" stroke="#960000"/>`;
  ys.forEach((y, i) => { o += text(1353, y + 1, prices[i], '#d83030', 12); });
  o += text(292, 484, 'q', '#e02020', 14, 'text-anchor="middle" font-weight="bold"');
  [[686, '财'], [1120, '港'], [1226, '榜']].forEach(([x, s]) => {
    o += `<rect x="${x - 6}" y="478" width="12" height="12" fill="#6c0000"/>` + text(x, 484, s, '#eee', 12, 'text-anchor="middle"');
  });
  const A = ['548,22', '622,112', '612,125', '668,143', '652,88', '640,100'].map(p => T.z12(...p.split(',').map(Number)).join(',')).join(' ');
  o += `<polygon points="${A}" fill="#ff2a20"/>`;
  document.getElementById('kchart').innerHTML = o;
}

/* ---------- volume ---------- */
const vol = `r510 r532 c537 r522 c540 r552 c545 r542 r517 r525 r540 c545 r540 c545 r540 c538 r535 r540 c540 c538 c540 c550 c542 c550 r548 r552 c552 c553 c553 r552 c552 r540 r544 r550 c548 c550 c553 r552 c552 r555 c553 r555 c534 r552 r550 r526 c540 c552 r552 r535 c545 c552 c548 r548 c552 c505 r502 r530 r520 r512 r505 r522 c530 c460 c510 r513 c535 r535 c518 c538 r542 c546 r535 r500 c525 c533 r545 r527 c535 c538 c532 r537 c540 c478 r530 c538 r547 r540 r523 r527 r526 c535 c540 c543 c510 c517 c535
r540 r540 c540 r542 r542 r530 r538 r537 r526 r538 c546 r540 c540 r545 r545 r540 r540 r492 c525 r530 c535 c538 r535 r517 r533 c543 r454 r436 r547 c114 r97 c486 c234 r292 c294 r385 r295 r246 c375 c258 r320 r175 r216 r196 c138 r210 c204 r258 r276 c132 c294 c345 r400 c387 c381 c438 c414 c447 r319 c405 r405 r385 r390 r427 r436 c420 r468 r364 r274 c336 r441 r433 r456 r307 r246 c180 r288 c330 c321 c399 c453 r456 c468 c465 r385 r222 c288 c417 c366 r376`.split(/\s+/);
function vchart() {
  let o = grid([512, 564, 616], 23, 1350), b = '';
  vol.forEach((v, i) => {
    const top = Math.round(480 + +v.slice(1) / 3), x = cx(i);
    b += v[0] === 'c'
      ? `<rect x="${x - 2}" y="${top}" width="5" height="${669 - top}" fill="${C}"/>`
      : `<rect x="${x - 2 + .5}" y="${top + .5}" width="4" height="${669 - top}" fill="none" stroke="${R}"/>`;
  });
  o += `<g shape-rendering="crispEdges">${b}</g>`;
  o += line([...pts('z5', '60,518 120,525 190,532 240,542 300,542 400,545 480,550 560,550 680,552 770,548 840,545 900,548 930,540 960,535 1040,520 1100,513 1170,522 1210,530 1280,530 1300,537 1360,532 1400,530 1500,530'),
    ...pts('z6', '0,532 60,538 150,542 260,540 290,535 400,530 430,517 455,515 485,432 500,428 560,320 610,285 640,320 660,285 690,280 730,235 760,232 795,210 840,260 880,320 920,355 950,395 1000,395 1060,408 1100,390 1145,405 1180,370 1210,330 1240,335 1300,345 1330,378 1365,378 1390,390 1410,390')], W, 1);
  o += line([...pts('z5', '60,515 100,520 120,535 165,542 200,535 230,538 280,545 340,540 430,545 470,552 540,552 650,550 680,553 750,551 790,543 880,547 915,550 960,525 1000,518 1040,515 1050,505 1085,505 1120,520 1160,535 1200,533 1270,528 1300,536 1340,535 1380,524 1430,527 1500,533'),
    ...pts('z6', '0,530 30,530 60,535 130,535 170,540 260,542 290,525 340,522 370,535 410,530 430,498 450,497 465,470 485,330 500,338 530,245 560,330 580,300 620,318 650,280 670,272 720,188 770,220 800,240 850,320 880,390 910,415 930,400 960,405 985,385 1010,405 1050,425 1075,390 1100,375 1125,370 1150,392 1180,350 1210,275 1235,272 1260,330 1310,448 1330,445 1365,360 1410,333')], Y, 1);
  const A = ['1342,178', '1405,322', '1397,327', '1434,352', '1430,298', '1417,315'].map(p => T.z6(...p.split(',').map(Number)).join(',')).join(' ');
  o += `<polygon points="${A}" fill="#ff2a20"/>`;
  o += `<line x1="1350.5" x2="1350.5" y1="512" y2="670" stroke="#960000"/><line x1="23" x2="1403" y1="669.5" y2="669.5" stroke="#960000"/>`;
  [[512, '1670'], [564, '1117'], [616, '564']].forEach(([y, s]) => { o += text(1353, y, s, '#b4bcbc', 12); });
  o += `<rect x="1351.5" y="654.5" width="36" height="14" fill="none" stroke="#6c0000"/>` + text(1352, 662, 'X1000', '#b4bcbc', 12);
  document.getElementById('vchart').innerHTML = o;
}

/* ---------- MACD ---------- */
const histA = [270,270,282,292,302,308,315,318,325,330,327,328,340,335,340,350,350,355,350,351,348,345,357,372,385,388,385,392,396,394,393,384,378,355,352,352,350,352,354,352,352,355,375,387,385,365,350,345,342,347,337,338,332,333,330,328,325,322,322,320,318,312,308,322,328,335,338,348,372,385,390,392,392,390,392,395,388,388,380,382,385,382,392,410,420,430,432,415,395,375,362,360,362,362,360,385,398,412,420,412,405,385,368,352,335,318,305,298,292,291,292,292,286,285,282,295,297,305,320,325,330,332,330,315,270,200,140,85,110,190,220,300,330,330];
const histB = [437,455,480,452,445,418,372,362,358,408,425,395,408,430,478,515,540,582,615,640,650,620,615,600,578,545,535,520,510,520,505,465,490,510,515,515,490,422,395,385,400,422,460,483,520,543,550,530,482,465,470,475,465];
function arrow(x, y, up, c) {
  const s = up ? -1 : 1;
  // y is the tip of the arrow
  return `<polygon points="${x},${y} ${x - 5},${y - 6 * s} ${x - 2},${y - 6 * s} ${x - 2},${y - 15 * s} ${x + 2},${y - 15 * s} ${x + 2},${y - 6 * s} ${x + 5},${y - 6 * s}" fill="${c}"/>`;
}
function mchart() {
  let o = grid([710, 735, 777, 819, 860], 23, 1350), h = '';
  const bar = (i, d) => {
    if (Math.abs(d) < .5) return;
    const x = cx(i) + .5, y1 = 819, y2 = 819 + d;
    h += `<line x1="${x}" x2="${x}" y1="${y1}" y2="${y2}" stroke="${d < 0 ? '#ff3232' : '#00d000'}"/>`;
  };
  histA.forEach((v, i) => bar(i, (v - 358) / 3));
  histB.forEach((v, i) => bar(134 + i, (v - 478) / 3));
  o += `<g shape-rendering="crispEdges">${h}</g>`;
  o += line([...pts('z7', '44,325 70,310 100,305 130,308 155,296 185,295 200,303 240,302 275,298 310,310 350,340 385,355 420,342 480,340 510,338 545,365 580,348 625,330 660,325 700,312 745,278 790,285 815,283 840,305 880,325 930,342 985,352 1030,415 1060,410 1090,395 1110,398 1150,448 1185,462 1220,435 1280,380 1350,328 1420,326 1440,325 1470,210 1505,90 1530,100 1555,150'),
    ...pts('z8', '0,255 20,270 65,225 100,157 120,165 135,150 165,158 200,240 240,350 275,380 310,367 340,380 370,360 405,397 430,370 465,303 500,335 535,393 570,362')], W, 1);
  o += line([...pts('z7', '44,368 70,340 110,322 180,305 240,302 285,300 340,320 395,340 480,340 520,343 560,352 620,340 700,322 760,295 820,288 900,320 990,345 1050,395 1130,398 1190,438 1235,440 1300,400 1380,346 1445,332 1490,230 1525,165'),
    ...pts('z8', '0,272 40,262 110,205 165,175 210,210 280,325 360,362 420,378 460,350 500,335 545,367 602,362')], Y, 1);
  pts('z7', '285,310 503,345 822,297').concat(pts('z8', '32,272 170,190 375,368 500,350')).forEach(p => { o += arrow(p[0], p[1], false, '#00d020'); });
  pts('z7', '422,345 570,350 1222,440').concat(pts('z8', '43,256 364,360 432,346 569,362')).forEach(p => { o += arrow(p[0], p[1], true, '#ff3232'); });
  o += `<line x1="23" x2="1350" y1="877.5" y2="877.5" stroke="#960000"/><line x1="1350.5" x2="1350.5" y1="710" y2="878" stroke="#960000"/>`;
  [[710, '+1.43'], [735, '+1.11'], [777, '+0.552'], [819, '+0']].forEach(([y, s]) => { o += text(1353, y, s, '#d83030', 12); });
  [[24, '06'], [168, '07'], [315, '08'], [476, '09'], [623, '10'], [736, '11'], [890, '12'], [1043, '01'], [1155, '02'], [1298, '03']].forEach(([x, s]) => {
    o += `<line x1="${x - .5}" x2="${x - .5}" y1="878" y2="882" stroke="#960000"/>` + text(x, 887, s, '#d83030', 12);
  });
  document.getElementById('mchart').innerHTML = o;
}

/* ---------- chip distribution ---------- */
const chip = `65,3 69,7 72,15 75,29 79,43 82,58 85,75 89,95 92,107 95,125 99,153 102,183`.split(' ').map(s => s.split(',').concat('#2f97c8'));
`106,205 109,228 112,252 116,231 119,212 122,187 129,100 133,72 136,66 139,60 143,63 146,82 149,96 153,130 156,146 159,159 163,120 166,70 170,64 173,64 176,57 180,68 183,92 186,93 190,82 193,62 196,51 199,48 203,48 207,54 213,36 217,34 220,27 223,20 227,17 230,20 234,11 237,6 240,3 244,3 249,3 254,3 258,2 264,2 266,1 271,2 274,3 277,5 281,5 284,5 287,5 291,4 296,3 299,3 304,3 309,2 313,2 318,1 322,1 327,2 331,1 336,1 340,1 345,1 350,1 356,1 362,1 368,1 374,1 380,1 386,1 392,1 398,1 404,1 410,1 416,1 422,1 428,1 434,1 440,1 446,1 452,1 458,1 464,1 470,1 476,1 482,1 488,1 494,1 500,1`.split(' ').forEach(s => chip.push(s.split(',').concat('#f02828')));
chip.push([126, 143, '#a8a8a8']);
document.getElementById('cchart').innerHTML = '<g shape-rendering="crispEdges">' + chip.map(([y, l, c]) => `<rect x="1404" y="${y}" width="${l}" height="1" fill="${c}"/>`).join('') + '</g>';

/* ---------- donut ---------- */
function donut() {
  const segs = [[0, 15, '#e02c2c'], [15, 48, '#a82018'], [48, 110, '#7c0808'], [110, 180, '#500606'], [180, 240, '#053e05'], [240, 307, '#117a11'], [307, 345, '#2e8e2e'], [345, 360, '#44b544']];
  const P = (r, a) => [(r * Math.sin(a * Math.PI / 180)).toFixed(2), (-r * Math.cos(a * Math.PI / 180)).toFixed(2)].join(' ');
  let o = segs.map(([a, b, c]) => `<path d="M${P(27, a)}L${P(55, a)}A55 55 0 0 1 ${P(55, b)}L${P(27, b)}A27 27 0 0 0 ${P(27, a)}z" fill="${c}"/>`).join('');
  [[19, -38, '9%'], [40, -9, '19%'], [21, 33, '18%'], [-22, 34, '17%'], [-42, -6, '19%'], [-23, -36, '10%']].forEach(([x, y, s]) => { o += text(x, y, s, '#f4f4f4', 11, 'text-anchor="middle" font-weight="bold"'); });
  o += text(-2, -9, '资金', '#fff', 12, 'text-anchor="middle"') + text(-2, 7, '占比', '#fff', 12, 'text-anchor="middle"');
  document.getElementById('donut').innerHTML = o;
}

/* ---------- right-hand lists ---------- */
document.getElementById('flows').innerHTML = [['净特大单', 447, 14], ['净大单', -2752, 90], ['净中单', 1361, 44], ['净小单', 944, 30]].map(([n, v, w]) => v > 0
  ? `<div class="frow"><span>${n}</span><span class="fcell l"><i class="fbar" style="width:${w}px;background:#b01e18"></i></span><span class="fcell r"><b class="fnum cr">${v}</b></span></div>`
  : `<div class="frow"><span>${n}</span><span class="fcell l"><b class="fnum cg">${v}</b></span><span class="fcell r"><i class="fbar" style="width:${w}px;background:#349a30"></i></span></div>`).join('');
document.getElementById('rank').innerHTML = [['EDR概念', '2.11', '10.9'], ['通信服务', '3.35', '8.8'], ['黑色家电', '2.18', '8.6'], ['培育钻石', '1.12', '7.7'], ['云办公', '3.12', '7.6'], ['电子化学品', '3.11', '7.4'], ['拼多多概念', '3.79', '7.1'], ['福建自贸区', '1.64', '7.1'], ['造纸', '1.83', '6.9'], ['网络游戏', '1.89', '6.8'], ['数据安全', '3.45', '6.4']].map(([n, a, b]) => `<div class="rrow"><span class="n">${n}</span><b>+${a}%</b><b>+${b}%</b></div>`).join('');
document.getElementById('short').innerHTML = [['09:30:03', '574万'], ['09:34:23', '719万'], ['09:39:44', '508万'], ['09:42:32', '960万'], ['14:52:26', '541万']].map(([t, v]) => `<div class="srow"><span>${t}</span><span>人民网</span><span>大笔买入</span><span>${v}</span></div>`).join('');

kchart(); vchart(); mchart(); donut();
```
